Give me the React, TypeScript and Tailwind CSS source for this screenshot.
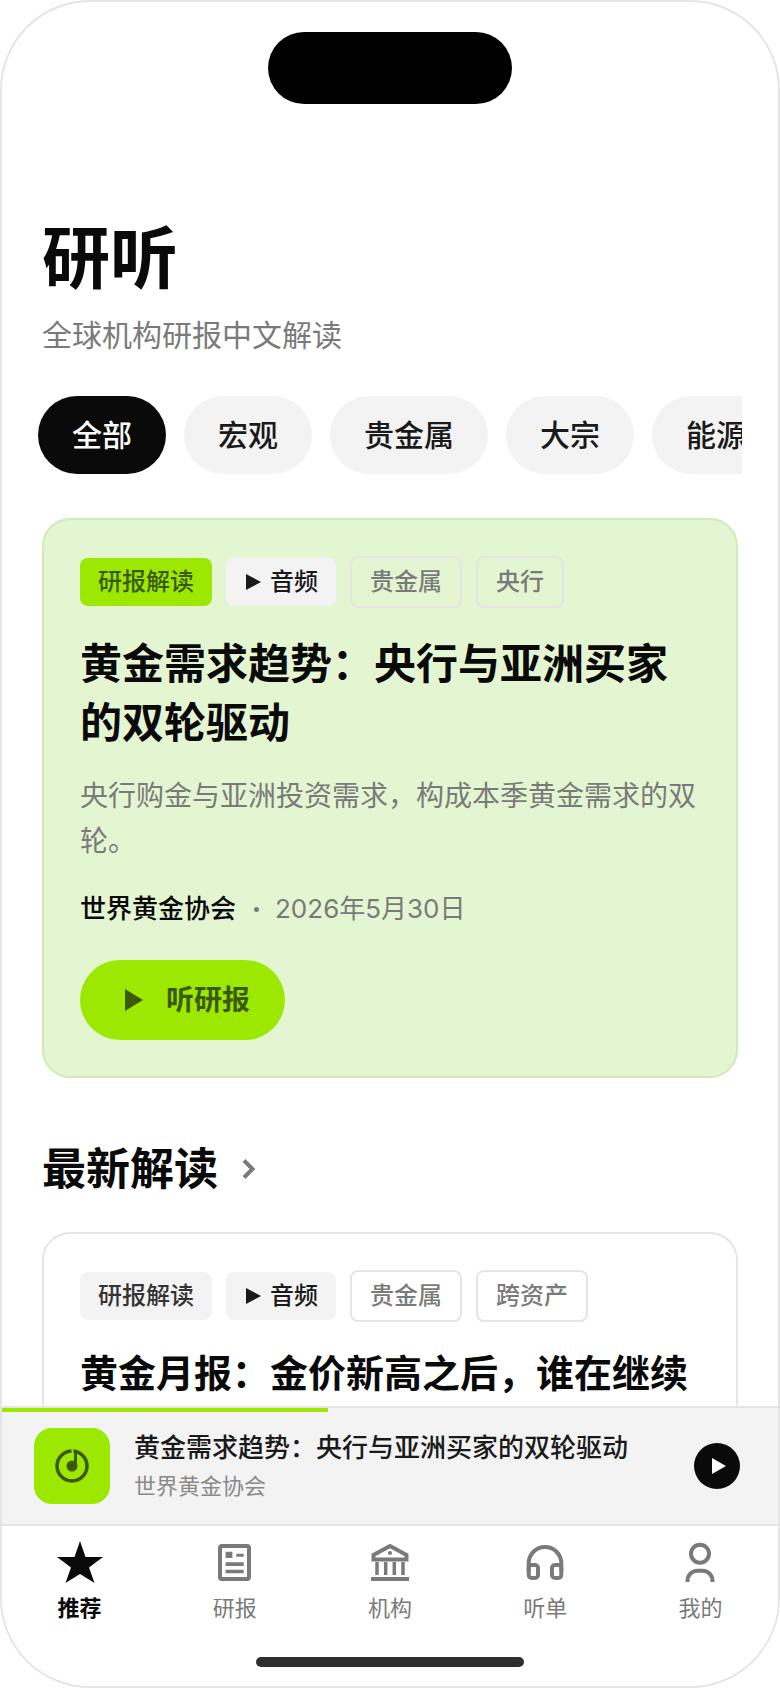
const font = "font-['Inter','Noto_Sans_CJK_SC',sans-serif]"

const filters = ['全部', '宏观', '贵金属', '大宗', '能源']

function Tag({ kind, children }: { kind: 'lime' | 'gray' | 'line'; children: React.ReactNode }) {
  if (kind === 'line') {
    return (
      <span className="flex h-[52px] items-center rounded-[8px] border-2 border-[#e5e5e5] px-[18px] text-[24px] font-medium text-[#7a7a7a]">
        {children}
      </span>
    )
  }
  return (
    <span
      className={
        kind === 'lime'
          ? 'flex h-[48px] items-center rounded-[8px] bg-[#9ce800] px-[18px] text-[24px] font-medium text-[#3a5a0a]'
          : 'flex h-[48px] items-center rounded-[8px] bg-[#f3f3f3] px-[18px] text-[24px] font-medium text-[#333333]'
      }
    >
      {children}
    </span>
  )
}

function AudioTag() {
  return (
    <span className="flex h-[48px] items-center rounded-[8px] bg-[#f3f3f3] px-[18px] text-[24px] font-medium text-[#1a1a1a]">
      <svg viewBox="0 0 17 16" className="mr-[9px] h-[16px] w-[17px]" fill="#1a1a1a">
        <path d="M2 0 L17 8 L2 16 Z" />
      </svg>
      音频
    </span>
  )
}

function NavItem({ label, active, children }: { label: string; active?: boolean; children: React.ReactNode }) {
  return (
    <div className="flex flex-col items-center">
      <svg viewBox="0 0 44 44" className="h-[44px] w-[44px] overflow-visible" fill="none" stroke="#7a7a7a" strokeWidth="4">
        {children}
      </svg>
      <span className={active ? 'mt-[8px] text-[22px] leading-[30px] font-bold text-[#0a0a0a]' : 'mt-[8px] text-[22px] leading-[30px] text-[#7a7a7a]'}>
        {label}
      </span>
    </div>
  )
}

export default function App() {
  return (
    <div className={`${font} relative flex h-[1688px] w-[780px] flex-col overflow-hidden rounded-[90px] border-2 border-[#e5e5e5] bg-white`}>
      {/* dynamic island */}
      <div className="absolute top-[30px] left-[266px] h-[72px] w-[244px] rounded-[36px] bg-black" />

      <main className="min-h-0 flex-1 overflow-hidden px-[40px] pt-[216px]">
        <h1 className="text-[68px] leading-[80px] font-bold text-[#0a0a0a]">研听</h1>
        <p className="mt-[16px] text-[30px] leading-[42px] text-[#7a7a7a]">全球机构研报中文解读</p>

        <div className="-mx-[4px] mt-[40px] flex gap-[18px] overflow-hidden">
          {filters.map((name, i) => (
            <span
              key={name}
              className={
                i === 0
                  ? 'flex h-[78px] shrink-0 items-center rounded-[39px] bg-[#0a0a0a] px-[34px] text-[30px] font-medium text-white'
                  : 'flex h-[78px] shrink-0 items-center rounded-[39px] bg-[#f3f3f3] px-[34px] text-[30px] font-medium text-[#1a1a1a]'
              }
            >
              {name}
            </span>
          ))}
        </div>

        <section className="mt-[44px] rounded-[28px] border-2 border-[#d2e9b8] bg-[#e4f5d2] p-[36px]">
          <div className="flex items-center gap-[14px]">
            <Tag kind="lime">研报解读</Tag>
            <AudioTag />
            <Tag kind="line">贵金属</Tag>
            <Tag kind="line">央行</Tag>
          </div>
          <h2 className="mt-[26px] text-[42px] leading-[59px] font-bold text-[#0a0a0a]">
            黄金需求趋势：央行与亚洲买家的双轮驱动
          </h2>
          <p className="mt-[22px] text-[28px] leading-[45px] text-[#7a7a7a]">
            央行购金与亚洲投资需求，构成本季黄金需求的双轮。
          </p>
          <div className="mt-[27px] flex items-center text-[26px] leading-[36px]">
            <span className="font-medium text-[#0a0a0a]">世界黄金协会</span>
            <span className="mr-[16px] ml-[18px] h-[5px] w-[5px] rounded-full bg-[#7a7a7a]" />
            <span className="text-[#7a7a7a]">2026年5月30日</span>
          </div>
          <button className="mt-[33px] flex h-[80px] items-center gap-[14px] rounded-[40px] bg-[#9ce800] pr-[35px] pl-[36px] text-[28px] font-bold text-[#3a5a0a]">
            <svg viewBox="0 0 36 36" className="h-[36px] w-[36px]" fill="#3a5a0a">
              <path d="M9 7 L27 18 L9 29 Z" />
            </svg>
            听研报
          </button>
        </section>

        <div className="mt-[61px] flex items-center gap-[24px]">
          <h2 className="text-[44px] leading-[60px] font-bold text-[#0a0a0a]">最新解读</h2>
          <svg viewBox="0 0 14 20" className="h-[20px] w-[14px]" fill="none" stroke="#7a7a7a" strokeWidth="4">
            <path d="M2 1.5 L10.5 10 L2 18.5" />
          </svg>
        </div>

        <section className="mt-[33px] rounded-[28px] border-2 border-[#e5e5e5] bg-white p-[36px]">
          <div className="flex items-center gap-[14px]">
            <Tag kind="gray">研报解读</Tag>
            <AudioTag />
            <Tag kind="line">贵金属</Tag>
            <Tag kind="line">跨资产</Tag>
          </div>
          <h2 className="mt-[25px] text-[38px] leading-[53px] font-bold text-[#0a0a0a]">黄金月报：金价新高之后，谁在继续</h2>
        </section>
      </main>

      {/* mini player */}
      <div className="shrink-0 border-y-2 border-[#e5e5e5] bg-[#f3f3f3]">
        <div className="h-[4px] w-[326px] bg-[#9ce800]" />
        <div className="flex items-center pt-[16px] pr-[38px] pb-[20px] pl-[32px]">
          <div className="h-[76px] w-[76px] shrink-0 rounded-[18px] bg-[#9ce800]">
            <svg viewBox="0 0 76 76" className="h-[76px] w-[76px]" fill="none">
              <circle cx="38" cy="38" r="15" stroke="#3a5a0a" strokeWidth="3.5" />
              <path d="M38.5 19 V26" stroke="#9ce800" strokeWidth="2" />
              <path d="M41.5 22 V38" stroke="#3a5a0a" strokeWidth="3" />
              <circle cx="38" cy="38" r="5.5" fill="#3a5a0a" />
            </svg>
          </div>
          <div className="ml-[24px] min-w-0 flex-1">
            <p className="text-[26px] leading-[34px] font-medium text-[#1a1a1a]">黄金需求趋势：央行与亚洲买家的双轮驱动</p>
            <p className="mt-[6px] text-[22px] leading-[30px] text-[#8a8a8a]">世界黄金协会</p>
          </div>
          <div className="flex h-[46px] w-[46px] shrink-0 items-center justify-center rounded-full bg-[#0a0a0a]">
            <svg viewBox="0 0 14 16" className="ml-[3px] h-[16px] w-[14px]" fill="white">
              <path d="M0 0 L14 8 L0 16 Z" />
            </svg>
          </div>
        </div>
      </div>

      {/* tab bar */}
      <nav className="grid shrink-0 grid-cols-5 bg-white pt-[15px]">
        <NavItem label="推荐" active>
          <polygon points="22,0 27.5,16 45,16 31,26.5 36.5,42 22,33 7.5,42 13,26.5 -1,16 16.5,16" fill="#0a0a0a" stroke="none" />
        </NavItem>
        <NavItem label="研报">
          <rect x="7" y="5" width="29" height="33" rx="2" />
          <path d="M12.6 10.7 H19.4 V17 H12.6 Z" fill="#7a7a7a" stroke="none" />
          <path d="M23.3 12.7 H30.7 V15.7 H23.3 Z M12.6 21.3 H30.7 V25 H12.6 Z M12.6 28.7 H30.7 V32.3 H12.6 Z" fill="#7a7a7a" stroke="none" />
        </NavItem>
        <NavItem label="机构">
          <path d="M22 5 L38.5 14 V18.5 H5.5 V14 Z" />
          <circle cx="22" cy="12" r="2" fill="#7a7a7a" stroke="none" />
          <path d="M9 21 V34 M17.7 21 V34 M26.3 21 V34 M35 21 V34" strokeWidth="3.5" />
          <path d="M3 36 H41 V40 H3 Z" fill="#7a7a7a" stroke="none" />
        </NavItem>
        <NavItem label="听单">
          <path d="M5.7 30 V22.3 a16.3 16.3 0 0 1 32.6 0 V30" />
          <rect x="5.7" y="24" width="9.3" height="13" rx="3" />
          <rect x="29" y="24" width="9.3" height="13" rx="3" />
        </NavItem>
        <NavItem label="我的">
          <circle cx="22" cy="12.7" r="9" />
          <path d="M9.5 41 V39.75 a10 10 0 0 1 10 -10 h5 a10 10 0 0 1 10 10 V41" />
        </NavItem>
      </nav>

      {/* home indicator */}
      <div className="flex shrink-0 justify-center bg-white pt-[34px] pb-[19px]">
        <div className="h-[10px] w-[268px] rounded-full bg-[#2e2e2e]" />
      </div>
    </div>
  )
}
